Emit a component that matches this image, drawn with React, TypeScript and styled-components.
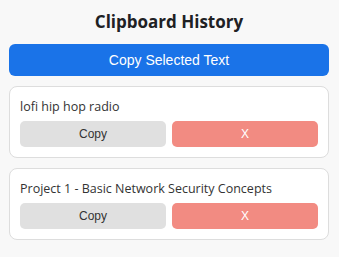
import React from 'react';
import styled, { createGlobalStyle } from 'styled-components';

const GlobalStyle = createGlobalStyle`
    body {
        margin: 0;
        background: #f8f8f8;
        font-family: "Open Sans", "Noto Sans", sans-serif;
    }
`;

const Popup = styled.div`
    width: 320px;
    padding: 10px 10px 18px 9px;
`;

const Title = styled.h2`
    margin: 0 0 10px;
    font-size: 17px;
    line-height: 24px;
    font-weight: 700;
    text-align: center;
    color: #202124;
`;

const PrimaryButton = styled.button`
    display: block;
    width: 100%;
    height: 32px;
    margin: 0 0 10px;
    border: none;
    border-radius: 6px;
    background: #1a73e8;
    color: #fff;
    font-family: "Liberation Sans", Arial, sans-serif;
    font-size: 14px;
    cursor: pointer;
`;

const Entry = styled.div`
    background: #fff;
    border: 1px solid #ddd;
    border-radius: 8px;
    padding: 10px;
    margin-bottom: 10px;
`;

const EntryText = styled.div`
    font-size: 12.5px;
    line-height: 20px;
    margin-bottom: 4px;
    color: #333;
`;

const Actions = styled.div`
    display: flex;
    gap: 6px;
`;

const ActionButton = styled.button<{ $danger?: boolean }>`
    flex: 1;
    height: 26px;
    border: none;
    border-radius: 5px;
    background: ${(p) => (p.$danger ? '#f28b82' : '#e0e0e0')};
    color: ${(p) => (p.$danger ? '#fff' : '#333')};
    font-family: "Liberation Sans", Arial, sans-serif;
    font-size: 12px;
    cursor: pointer;
`;

const history = ['lofi hip hop radio', 'Project 1 - Basic Network Security Concepts'];

const App: React.FC = () => {
    return (
        <>
            <GlobalStyle />
            <Popup>
                <Title>Clipboard History</Title>
                <PrimaryButton>Copy Selected Text</PrimaryButton>
                {history.map((item) => (
                    <Entry key={item}>
                        <EntryText>{item}</EntryText>
                        <Actions>
                            <ActionButton>Copy</ActionButton>
                            <ActionButton $danger>X</ActionButton>
                        </Actions>
                    </Entry>
                ))}
            </Popup>
        </>
    );
};

export default App;
